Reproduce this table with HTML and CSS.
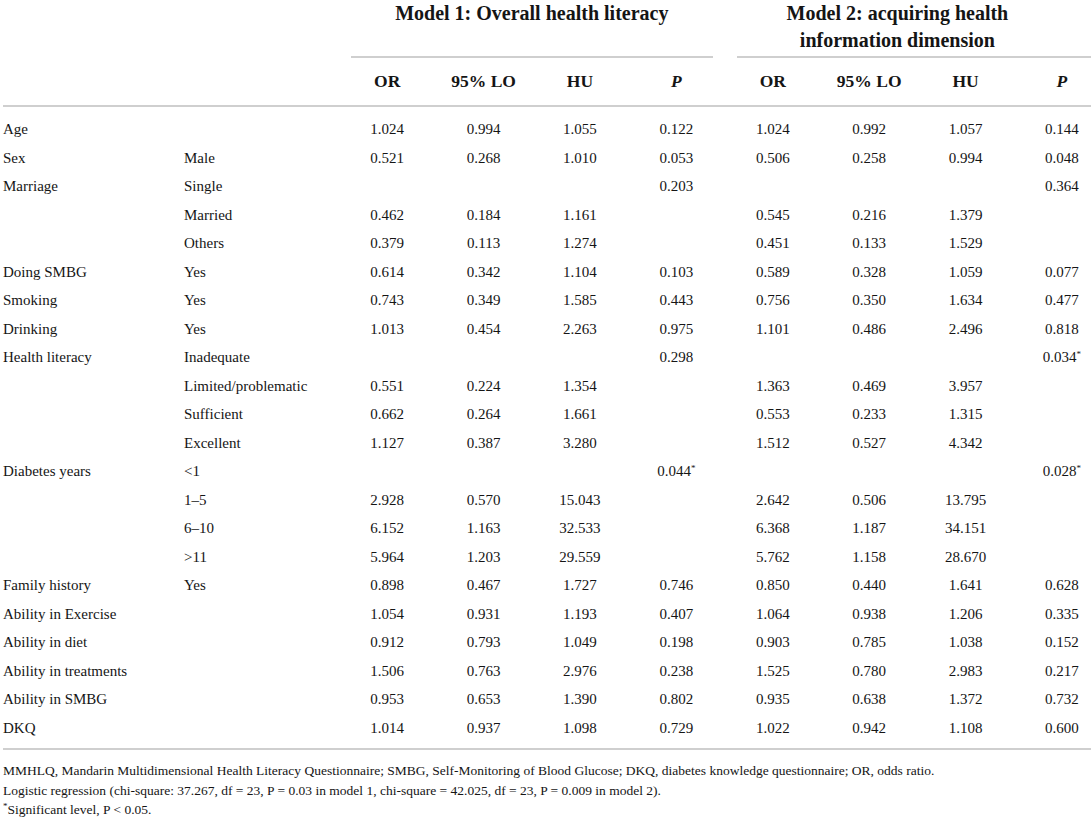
FILE: index.html
```html
<!DOCTYPE html>
<html lang="en">
<head>
<meta charset="utf-8">
<title>Logistic regression table</title>
<link rel="stylesheet" href="styles.css">
</head>
<body>
<div class="page">
<table class="tbl">
  <colgroup>
    <col class="c-var"><col class="c-cat">
    <col class="c-num"><col class="c-num"><col class="c-num"><col class="c-num">
    <col class="c-num"><col class="c-num"><col class="c-num"><col class="c-num">
  </colgroup>
  <thead>
    <tr class="grp">
      <th></th><th></th>
      <th colspan="4"><div class="gline">Model 1: Overall health literacy</div></th>
      <th colspan="4"><div class="gline gline-2">Model 2: acquiring health<br>information dimension</div></th>
    </tr>
    <tr class="sub">
      <th></th><th></th>
      <th>OR</th><th>95% LO</th><th>HU</th><th><i>P</i></th>
      <th>OR</th><th>95% LO</th><th>HU</th><th><i>P</i></th>
    </tr>
  </thead>
  <tbody>
    <tr><td>Age</td><td></td><td>1.024</td><td>0.994</td><td>1.055</td><td>0.122</td><td>1.024</td><td>0.992</td><td>1.057</td><td>0.144</td></tr>
    <tr><td>Sex</td><td>Male</td><td>0.521</td><td>0.268</td><td>1.010</td><td>0.053</td><td>0.506</td><td>0.258</td><td>0.994</td><td>0.048</td></tr>
    <tr><td>Marriage</td><td>Single</td><td></td><td></td><td></td><td>0.203</td><td></td><td></td><td></td><td>0.364</td></tr>
    <tr><td></td><td>Married</td><td>0.462</td><td>0.184</td><td>1.161</td><td></td><td>0.545</td><td>0.216</td><td>1.379</td><td></td></tr>
    <tr><td></td><td>Others</td><td>0.379</td><td>0.113</td><td>1.274</td><td></td><td>0.451</td><td>0.133</td><td>1.529</td><td></td></tr>
    <tr><td>Doing SMBG</td><td>Yes</td><td>0.614</td><td>0.342</td><td>1.104</td><td>0.103</td><td>0.589</td><td>0.328</td><td>1.059</td><td>0.077</td></tr>
    <tr><td>Smoking</td><td>Yes</td><td>0.743</td><td>0.349</td><td>1.585</td><td>0.443</td><td>0.756</td><td>0.350</td><td>1.634</td><td>0.477</td></tr>
    <tr><td>Drinking</td><td>Yes</td><td>1.013</td><td>0.454</td><td>2.263</td><td>0.975</td><td>1.101</td><td>0.486</td><td>2.496</td><td>0.818</td></tr>
    <tr><td>Health literacy</td><td>Inadequate</td><td></td><td></td><td></td><td>0.298</td><td></td><td></td><td></td><td>0.034<sup>*</sup></td></tr>
    <tr><td></td><td>Limited/problematic</td><td>0.551</td><td>0.224</td><td>1.354</td><td></td><td>1.363</td><td>0.469</td><td>3.957</td><td></td></tr>
    <tr><td></td><td>Sufficient</td><td>0.662</td><td>0.264</td><td>1.661</td><td></td><td>0.553</td><td>0.233</td><td>1.315</td><td></td></tr>
    <tr><td></td><td>Excellent</td><td>1.127</td><td>0.387</td><td>3.280</td><td></td><td>1.512</td><td>0.527</td><td>4.342</td><td></td></tr>
    <tr><td>Diabetes years</td><td>&lt;1</td><td></td><td></td><td></td><td>0.044<sup>*</sup></td><td></td><td></td><td></td><td>0.028<sup>*</sup></td></tr>
    <tr><td></td><td>1–5</td><td>2.928</td><td>0.570</td><td>15.043</td><td></td><td>2.642</td><td>0.506</td><td>13.795</td><td></td></tr>
    <tr><td></td><td>6–10</td><td>6.152</td><td>1.163</td><td>32.533</td><td></td><td>6.368</td><td>1.187</td><td>34.151</td><td></td></tr>
    <tr><td></td><td>&gt;11</td><td>5.964</td><td>1.203</td><td>29.559</td><td></td><td>5.762</td><td>1.158</td><td>28.670</td><td></td></tr>
    <tr><td>Family history</td><td>Yes</td><td>0.898</td><td>0.467</td><td>1.727</td><td>0.746</td><td>0.850</td><td>0.440</td><td>1.641</td><td>0.628</td></tr>
    <tr><td>Ability in Exercise</td><td></td><td>1.054</td><td>0.931</td><td>1.193</td><td>0.407</td><td>1.064</td><td>0.938</td><td>1.206</td><td>0.335</td></tr>
    <tr><td>Ability in diet</td><td></td><td>0.912</td><td>0.793</td><td>1.049</td><td>0.198</td><td>0.903</td><td>0.785</td><td>1.038</td><td>0.152</td></tr>
    <tr><td>Ability in treatments</td><td></td><td>1.506</td><td>0.763</td><td>2.976</td><td>0.238</td><td>1.525</td><td>0.780</td><td>2.983</td><td>0.217</td></tr>
    <tr><td>Ability in SMBG</td><td></td><td>0.953</td><td>0.653</td><td>1.390</td><td>0.802</td><td>0.935</td><td>0.638</td><td>1.372</td><td>0.732</td></tr>
    <tr><td>DKQ</td><td></td><td>1.014</td><td>0.937</td><td>1.098</td><td>0.729</td><td>1.022</td><td>0.942</td><td>1.108</td><td>0.600</td></tr>
  </tbody>
</table>
<div class="notes">
  <p>MMHLQ, Mandarin Multidimensional Health Literacy Questionnaire; SMBG, Self-Monitoring of Blood Glucose; DKQ, diabetes knowledge questionnaire; OR, odds ratio.</p>
  <p>Logistic regression (chi-square: 37.267, df = 23, P = 0.03 in model 1, chi-square = 42.025, df = 23, P = 0.009 in model 2).</p>
  <p><sup>*</sup>Significant level, P &lt; 0.05.</p>
</div>
</div>
</body>
</html>
```

FILE: styles.css
```css
html, body {
  margin: 0;
  padding: 0;
  background: #ffffff;
}
body {
  overflow: hidden;
  font-family: "Liberation Serif", "Times New Roman", serif;
  color: #151515;
}
.page {
  width: 1110px;
  padding-left: 3px;
}
.tbl {
  border-collapse: collapse;
  table-layout: fixed;
  width: 1107px;
  font-size: 15px;
}
.c-var { width: 181px; }
.c-cat { width: 155px; }
.c-num { width: 96.4px; }

.tbl th {
  font-weight: bold;
  padding: 0;
}
.grp th {
  vertical-align: top;
  font-size: 20px;
  line-height: 27px;
  padding: 0 12px;
}
.gline {
  text-align: center;
  border-bottom: 2px solid #cfcfcf;
  height: 58px;
  box-sizing: border-box;
}
.gline-2 {
  padding-right: 40px;
}
.sub th {
  text-align: center;
  font-size: 17.5px;
  height: 47px;
  vertical-align: middle;
  border-bottom: 2px solid #cfcfcf;
}
.tbl td {
  padding: 0 12px;
  line-height: 28.5px;
  text-align: center;
  white-space: nowrap;
}
.tbl td:first-child,
.tbl td:nth-child(2) {
  text-align: left;
  padding: 0;
}
.tbl tbody tr:first-child td { padding-top: 8px; }
.tbl tbody tr:last-child td {
  padding-bottom: 6px;
  border-bottom: 2px solid #cfcfcf;
}
.tbl sup, .notes sup {
  font-size: 9px;
  line-height: 0;
  vertical-align: 5px;
}
.notes {
  padding-top: 11px;
  font-size: 13.5px;
  line-height: 19.5px;
}
.notes p {
  margin: 0;
}
```
